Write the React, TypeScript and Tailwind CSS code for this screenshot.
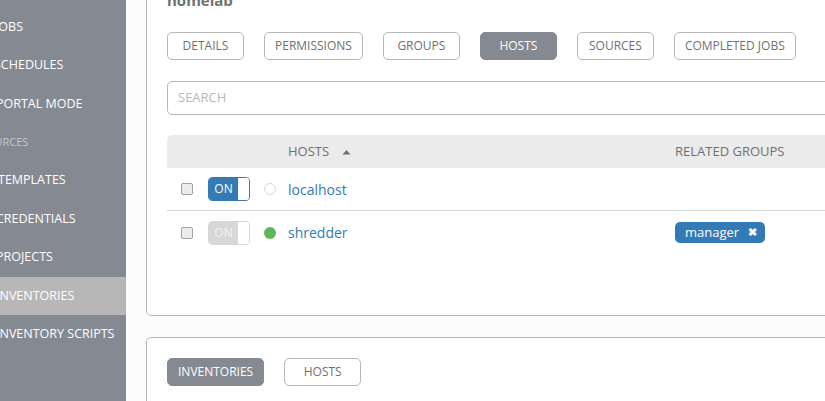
import { useState } from "react";

const NAV = [
  { label: "JOBS", shift: "-ml-[5px]" },
  { label: "SCHEDULES", shift: "-ml-[6px]" },
  { label: "PORTAL MODE", shift: "-ml-[4px]" },
  { label: "RESOURCES", shift: "-ml-[33px]", heading: true },
  { label: "TEMPLATES", shift: "-ml-[2px]" },
  { label: "CREDENTIALS", shift: "-ml-[4px]" },
  { label: "PROJECTS", shift: "-ml-[4px]" },
  { label: "INVENTORIES", shift: "-ml-[4px]", active: true },
  { label: "INVENTORY SCRIPTS", shift: "-ml-[4px]" },
];

const TABS = ["DETAILS", "PERMISSIONS", "GROUPS", "HOSTS", "SOURCES", "COMPLETED JOBS"];

function TabButton({ label, active }: { label: string; active?: boolean }) {
  return (
    <button
      className={
        active
          ? "h-[28px] min-w-[77px] rounded-[5px] border border-[#848992] bg-[#848992] px-[10px] text-[12px] text-white"
          : "h-[28px] min-w-[77px] rounded-[5px] border border-[#b7b7b7] bg-white px-[10px] text-[12px] text-[#707070]"
      }
    >
      {label}
    </button>
  );
}

function Toggle({ on }: { on: boolean }) {
  return (
    <div
      className={
        on
          ? "flex h-[24px] w-[42px] overflow-hidden rounded-[4px] border border-[#337ab7]"
          : "flex h-[24px] w-[42px] overflow-hidden rounded-[4px] border border-[#d7d7d7]"
      }
    >
      <div
        className={
          on
            ? "flex w-[29px] items-center justify-center bg-[#337ab7] text-[12px] text-white"
            : "flex w-[29px] items-center justify-center bg-[#d7d7d7] text-[12px] text-[#f2f2f2]"
        }
      >
        ON
      </div>
      <div className="flex-1 bg-white" />
    </div>
  );
}

function HostRow({ name, on, active, group, last }: { name: string; on: boolean; active: boolean; group?: string; last?: boolean }) {
  const [checked, setChecked] = useState(false);
  return (
    <div className={last ? "flex h-[43px] items-center" : "flex h-[43px] items-center border-b border-[#d7d7d7]"}>
      <div className="flex w-[41px] justify-end pr-[15px]">
        <input
          type="checkbox"
          checked={checked}
          onChange={() => setChecked(!checked)}
          className="h-[12px] w-[12px] appearance-none rounded-[2px] border border-[#a0a0a0] bg-[#ececec]"
        />
      </div>
      <Toggle on={on} />
      <div className="ml-[14px] w-[24px]">
        {active ? (
          <div className="h-[12px] w-[12px] rounded-full bg-[#5cb85c]" />
        ) : (
          <div className="h-[12px] w-[12px] rounded-full border-[1.5px] border-[#d7d7d7]" />
        )}
      </div>
      <a className="w-[387px] text-[14px] text-[#337ab7]">{name}</a>
      {group && (
        <span className="flex h-[21px] w-[90px] items-center justify-between rounded-[5px] bg-[#337ab7] pl-[10px] pr-[8px] text-[13px] text-white">
          {group}
          <span className="text-[11px] font-bold">✖</span>
        </span>
      )}
    </div>
  );
}

export default function App() {
  return (
    <div className="flex h-[401px] w-[825px] overflow-hidden font-['Open_Sans',sans-serif]">
      <nav className="w-[126px] shrink-0 overflow-hidden bg-[#848992] pt-[8px]">
        {NAV.map((item) => (
          <div
            key={item.label}
            className={
              item.active
                ? "flex h-[38.4px] items-center whitespace-nowrap bg-[#b7b7b7] text-[12.5px] text-white"
                : "flex h-[38.4px] items-center whitespace-nowrap text-[12.5px] text-white"
            }
          >
            <span className={item.heading ? `${item.shift} text-[11px] text-[#c4c6ca]` : item.shift}>{item.label}</span>
          </div>
        ))}
      </nav>

      <main className="min-w-0 flex-1 bg-[#fcfcfc] pl-[20px]">
        <section className="-mt-[20px] mr-[-20px] h-[336px] rounded-[5px] border border-[#b7b7b7] bg-white pl-[20px] pt-[9px]">
          <h1 className="h-[21px] text-[15px] leading-[21px] font-bold text-[#707070]">homelab</h1>
          <div className="mt-[21px] flex gap-[20px]">
            {TABS.map((t) => (
              <TabButton key={t} label={t} active={t === "HOSTS"} />
            ))}
          </div>
          <div className="mt-[21px] flex h-[34px] items-center rounded-[5px] border border-[#b7b7b7] pl-[10px] text-[13px] text-[#b7b7b7]">
            SEARCH
          </div>
          <div className="mt-[20px]">
            <div className="flex h-[33px] items-center rounded-tl-[5px] bg-[#ebebeb] text-[13px] text-[#707070]">
              <div className="flex w-[508px] items-center pl-[121px]">
                HOSTS
                <svg className="ml-[13px]" width="9" height="6" viewBox="0 0 9 6">
                  <path d="M0.5 5.5 L4.5 1 L8.5 5.5 Z" fill="#707070" />
                </svg>
              </div>
              <div>RELATED GROUPS</div>
            </div>
            <HostRow name="localhost" on active={false} />
            <HostRow name="shredder" on={false} active group="manager" last />
          </div>
        </section>

        <section className="mt-[21px] mr-[-20px] h-[100px] rounded-[5px] border border-[#b7b7b7] bg-white pl-[20px] pt-[20px]">
          <div className="flex gap-[20px]">
            <TabButton label="INVENTORIES" active />
            <TabButton label="HOSTS" />
          </div>
        </section>
      </main>
    </div>
  );
}
